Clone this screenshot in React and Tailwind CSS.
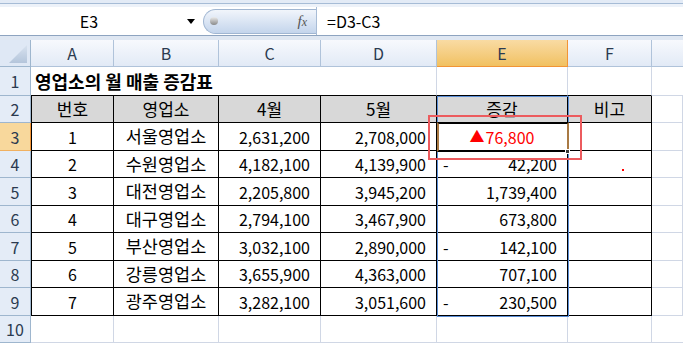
import React from 'react'

const font = { fontFamily: '"Noto Sans CJK KR", "Noto Sans", sans-serif' }

const rows = [
  ['1', '서울영업소', '2,631,200', '2,708,000', 'up', '76,800'],
  ['2', '수원영업소', '4,182,100', '4,139,900', '-', '42,200'],
  ['3', '대전영업소', '2,205,800', '3,945,200', '', '1,739,400'],
  ['4', '대구영업소', '2,794,100', '3,467,900', '', '673,800'],
  ['5', '부산영업소', '3,032,100', '2,890,000', '-', '142,100'],
  ['6', '강릉영업소', '3,655,900', '4,363,000', '', '707,100'],
  ['7', '광주영업소', '3,282,100', '3,051,600', '-', '230,500'],
]

const heights = ['h-[28px]', 'h-[27px]', 'h-[28px]', 'h-[27px]', 'h-[28px]', 'h-[27px]', 'h-[28px]']

const RowHead = ({ n, active, h }) => (
  <div
    className={
      active
        ? `${h} flex items-center justify-center bg-[#f8d89c] border-r border-b border-r-[#f29436] border-b-[#f0b060] text-[16px] text-[#2b3a50]`
        : `${h} flex items-center justify-center bg-[#e4ecf7] border-r border-b border-[#9eb6ce] text-[16px] text-[#2b3a50]`
    }
  >
    {n}
  </div>
)

const Blank = ({ h }) => <div className={`${h} border-r border-b border-[#d0d7e5] bg-white`}></div>

export default function App() {
  return (
    <div className="w-[683px] h-[343px] overflow-hidden bg-white" style={font}>
      {/* ribbon edge */}
      <div className="h-[3px] bg-[#e3ebf6]"></div>
      <div className="h-px bg-[#a6bcd6]"></div>
      <div className="h-[3px] bg-[#edf2f9]"></div>

      {/* formula bar */}
      <div className="h-[29px] flex items-center bg-white border-b border-[#8ea4c0]">
        <div className="w-[203px] h-full flex items-center">
          <div className="w-[178px] text-center text-[16px] text-black">E3</div>
          <div className="w-0 h-0 border-l-[4px] border-r-[4px] border-t-[5px] border-l-transparent border-r-transparent border-t-black ml-[9px]"></div>
        </div>
        <div className="w-[113px] h-[25px] flex items-center justify-between rounded-l-full border border-r-0 border-[#a0b6d2] bg-gradient-to-b from-[#f1f5fb] to-[#c4d5ec] pl-[6px] pr-[9px]">
          <div className="w-[8px] h-[8px] rounded-full bg-gradient-to-b from-[#ececec] to-[#8a8a8a]"></div>
          <span className="text-[15px] italic text-[#555]" style={{ fontFamily: '"Liberation Serif", serif' }}>
            f<span className="text-[12px]">x</span>
          </span>
        </div>
        <div className="w-px h-full bg-[#a8bcd6]"></div>
        <div className="pl-[10px] text-[16px] text-black">=D3-C3</div>
      </div>
      <div className="h-[4px] bg-[#dfe7f2]"></div>

      {/* sheet */}
      <div className="relative">
        <div className="grid grid-cols-[31px_83px_105px_102px_116px_131px_84px_1fr]">
          {/* column header */}
          <div className="h-[27px] flex items-end justify-end p-[3px] bg-[#dfe8f5] border-r border-b border-[#9eb6ce]">
            <svg width="18" height="18" viewBox="0 0 18 18">
              <defs>
                <linearGradient id="corner" x1="0" y1="0" x2="0" y2="1">
                  <stop offset="0" stopColor="#d8e2ef" />
                  <stop offset="1" stopColor="#b4c5db" />
                </linearGradient>
              </defs>
              <polygon points="18,0 18,18 0,18" fill="url(#corner)" />
            </svg>
          </div>
          {['A', 'B', 'C', 'D'].map((c) => (
            <div key={c} className="h-[27px] flex items-center justify-center bg-gradient-to-b from-[#f7f9fd] to-[#e2eaf6] border-r border-b border-[#b0c3da] text-[16px] text-[#2b3a50]">
              {c}
            </div>
          ))}
          <div className="h-[27px] flex items-center justify-center bg-gradient-to-b from-[#f9dba3] to-[#f1c160] border-r border-b border-[#f29436] text-[16px] text-[#2b3a50]">E</div>
          <div className="h-[27px] flex items-center justify-center bg-gradient-to-b from-[#f7f9fd] to-[#e2eaf6] border-r border-b border-[#b0c3da] text-[16px] text-[#2b3a50]">F</div>
          <div className="h-[27px] bg-gradient-to-b from-[#f7f9fd] to-[#e2eaf6] border-b border-[#b0c3da]"></div>

          {/* row 1 */}
          <RowHead n="1" h="h-[29px]" />
          <div className="col-span-3 h-[29px] flex items-center pl-[4px] border-b border-black text-[18px] font-bold text-black whitespace-nowrap">
            영업소의 월 매출 증감표
          </div>
          <div className="h-[29px] border-r border-b border-r-[#d0d7e5] border-b-black"></div>
          <div className="h-[29px] border-r border-b border-r-[#d0d7e5] border-b-black"></div>
          <div className="h-[29px] border-r border-b border-r-[#d0d7e5] border-b-black"></div>
          <div className="h-[29px] border-b border-[#d0d7e5]"></div>

          {/* row 2 */}
          <RowHead n="2" h="h-[27px]" />
          {['번호', '영업소', '4월', '5월', '증감', '비고'].map((t, i) => (
            <div
              key={t}
              className={
                i === 0
                  ? 'h-[27px] flex items-center justify-center bg-[#d8d8d8] border-l border-r border-b border-black text-[17px] text-black'
                  : 'h-[27px] flex items-center justify-center bg-[#d8d8d8] border-r border-b border-black text-[17px] text-black'
              }
            >
              {t}
            </div>
          ))}
          <Blank h="h-[27px]" />

          {/* data rows */}
          {rows.map((r, i) => {
            const h = heights[i]
            return (
              <React.Fragment key={r[0]}>
                <RowHead n={String(i + 3)} h={h} active={i === 0} />
                <div className={`${h} flex items-center justify-center border-l border-r border-b border-black text-[16px] text-black`}>{r[0]}</div>
                <div className={`${h} flex items-center justify-center border-r border-b border-black text-[17.5px] text-black`}>{r[1]}</div>
                <div className={`${h} flex items-center justify-end pr-[10px] border-r border-b border-black text-[16px] text-black`}>{r[2]}</div>
                <div className={`${h} flex items-center justify-end pr-[10px] border-r border-b border-black text-[16px] text-black`}>{r[3]}</div>
                {r[4] === 'up' ? (
                  <div className={`${h} flex items-center justify-center border-r border-b border-black text-[16px] text-[#ff0000]`}>
                    <span className="text-[15px] mr-[1px]">▲</span>{r[5]}
                  </div>
                ) : (
                  <div className={`${h} flex items-center justify-between pl-[6px] pr-[10px] border-r border-b border-black text-[16px] text-black`}>
                    <span>{r[4]}</span>
                    <span>{r[5]}</span>
                  </div>
                )}
                <div className={`${h} border-r border-b border-black`}></div>
                <Blank h={h} />
              </React.Fragment>
            )
          })}

          {/* row 10 */}
          <RowHead n="10" h="h-[27px]" />
          {[0, 1, 2, 3, 4, 5].map((k) => (
            <Blank key={k} h="h-[27px]" />
          ))}
          <div className="h-[27px] border-b border-[#d0d7e5]"></div>
        </div>

        {/* column E selection */}
        <div className="absolute left-[437px] top-[56px] w-[132px] h-[221px] border border-[#5b8ed6] pointer-events-none"></div>
        {/* active cell */}
        <div className="absolute left-[437px] top-[82px] w-[132px] h-[30px] border-2 border-black border-l-[#a97a44] border-r-[#a97a44] pointer-events-none"></div>
        <div className="absolute left-[565px] top-[109px] w-[5px] h-[5px] bg-[#3a3a3a] border border-white pointer-events-none"></div>
        {/* annotation box */}
        <div className="absolute left-[428px] top-[75px] w-[154px] h-[45px] border-2 border-[#ec5b5e] pointer-events-none"></div>
        {/* stray red dot */}
        <div className="absolute left-[622px] top-[129px] w-[2px] h-[2px] bg-[#ff0000]"></div>
      </div>
    </div>
  )
}
